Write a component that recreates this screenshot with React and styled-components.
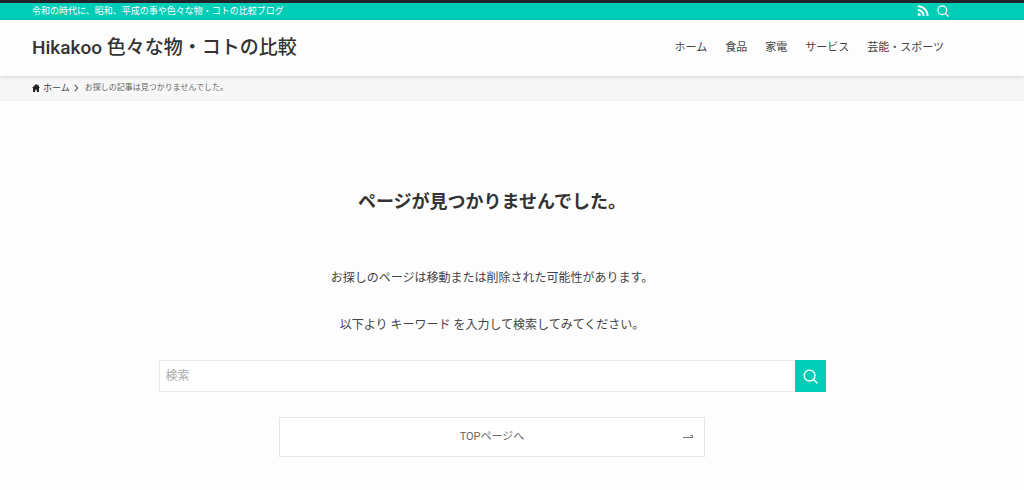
import React from "react";
import styled, { createGlobalStyle } from "styled-components";

const GlobalStyle = createGlobalStyle`
  *, *::before, *::after { box-sizing: border-box; }
  body {
    margin: 0;
    background: #fdfdfd;
    color: #333;
    font-family: Roboto, "Noto Sans CJK JP", sans-serif;
    font-size: 12px;
    line-height: 20px;
  }
  a { color: inherit; text-decoration: none; }
`;

const Container = styled.div`
  display: flex;
  align-items: center;
  justify-content: ${(p) => (p.$spread ? "space-between" : "flex-start")};
  height: 100%;
  padding: 0 72px 0 32px;
`;

const TopBar = styled.div`
  height: 20px;
  border-top: 3px solid #20252a;
  background: #00cdb5;
  color: #fff;
`;

const Tagline = styled.p`
  margin: 0;
  font-size: 9px;
  line-height: 17px;
`;

const IconLinks = styled.div`
  display: flex;
  gap: 8px;
  padding: 0 3px 2px 0;
`;

const IconLink = styled.a`
  display: block;
  width: 12px;
  height: 12px;
  svg { display: block; }
`;

const Header = styled.header`
  position: relative;
  height: 56px;
  background: #fdfdfd;
  box-shadow: 0 1px 4px rgba(0, 0, 0, 0.14);
`;

const SiteTitle = styled.a`
  font-size: 19px;
  font-weight: 500;
  line-height: 24px;
`;

const Nav = styled.nav`
  display: flex;
  gap: 18px;
  padding-right: 8px;
  color: #444;
  font-size: 11px;
`;

const Breadcrumb = styled.nav`
  height: 25px;
  background: #f7f7f7;
  border-bottom: 1px solid #f1f1f1;
  font-size: 8px;
  color: #666;
`;

const Crumb = styled.a`
  display: flex;
  align-items: center;
  gap: 3px;
  font-size: 9px;
  color: #444;
`;

const Chevron = styled.svg`
  margin: 0 6px 0 4px;
`;

const Main = styled.main`
  padding: 89px 72px 32px 32px;
`;

const Content = styled.div`
  display: flex;
  flex-direction: column;
  align-items: center;
  max-width: 667px;
  margin: 0 auto;
  text-align: center;
`;

const Heading = styled.h1`
  margin: 0 0 54px;
  font-size: 18px;
  font-weight: 700;
  line-height: 24px;
`;

const Message = styled.p`
  margin: 0;
  color: #444;
`;

const Messages = styled.div`
  display: flex;
  flex-direction: column;
  gap: 27px;
  margin-bottom: 25px;
`;

const SearchForm = styled.form`
  display: flex;
  width: 100%;
  height: 32px;
  margin-bottom: 25px;
`;

const SearchInput = styled.input`
  flex: 1;
  min-width: 0;
  padding: 0 6px;
  border: 1px solid #e8e8e8;
  border-right: 0;
  border-radius: 0;
  background: #fff;
  color: #333;
  font: inherit;
  &::placeholder { color: #aaa; opacity: 1; }
`;

const SearchButton = styled.button`
  display: flex;
  align-items: center;
  justify-content: center;
  width: 31px;
  padding: 0;
  border: 0;
  background: #00cdb5;
  color: #fff;
  cursor: pointer;
`;

const TopLink = styled.a`
  display: grid;
  grid-template-columns: 12px 1fr 12px;
  align-items: center;
  width: 64%;
  height: 40px;
  padding: 0 9px;
  border: 1px solid #e5e5e5;
  background: #fff;
  color: #666;
  font-size: 11px;
  span { grid-column: 2; }
`;

const SearchIcon = ({ size }) => (
  <svg width={size} height={size} viewBox="0 0 16 16" fill="none" stroke="currentColor" strokeWidth="1.5" strokeLinecap="round" aria-hidden="true">
    <circle cx="7" cy="7" r="5.8" />
    <path d="M11.3 11.3 15 15" />
  </svg>
);

const RssIcon = () => (
  <svg width="12" height="12" viewBox="0 0 12 12" fill="none" stroke="currentColor" strokeWidth="1.9" aria-hidden="true">
    <circle cx="2.2" cy="9.6" r="1.5" fill="currentColor" stroke="none" />
    <path d="M.7 5a6 6 0 0 1 6 6M.7 1.1a9.9 9.9 0 0 1 9.9 9.9" />
  </svg>
);

const HomeIcon = () => (
  <svg width="8" height="8" viewBox="0 0 8 8" fill="#222" aria-hidden="true">
    <path d="M4 0 0 3.9h1V8h2.2V5.8h1.6V8H7V3.9h1L6.7 2.6V.7h-1v.9Z" />
  </svg>
);

const navItems = ["ホーム", "食品", "家電", "サービス", "芸能・スポーツ"];

export default function App() {
  return (
    <>
      <GlobalStyle />
      <TopBar>
        <Container $spread>
          <Tagline>令和の時代に、昭和、平成の事や色々な物・コトの比較ブログ</Tagline>
          <IconLinks>
            <IconLink href="#rss" aria-label="RSS"><RssIcon /></IconLink>
            <IconLink href="#search" aria-label="検索"><SearchIcon size={12} /></IconLink>
          </IconLinks>
        </Container>
      </TopBar>
      <Header>
        <Container $spread>
          <SiteTitle href="#home">Hikakoo 色々な物・コトの比較</SiteTitle>
          <Nav>
            {navItems.map((item) => <a key={item} href="#category">{item}</a>)}
          </Nav>
        </Container>
      </Header>
      <Breadcrumb>
        <Container>
          <Crumb href="#home"><HomeIcon />ホーム</Crumb>
          <Chevron width="5" height="8" viewBox="0 0 5 8" fill="none" stroke="#555" strokeWidth="1.1" aria-hidden="true">
            <path d="m1 .8 2.6 3.2L1 7.2" />
          </Chevron>
          <span>お探しの記事は見つかりませんでした。</span>
        </Container>
      </Breadcrumb>
      <Main>
        <Content>
          <Heading>ページが見つかりませんでした。</Heading>
          <Messages>
            <Message>お探しのページは移動または削除された可能性があります。</Message>
            <Message>以下より キーワード を入力して検索してみてください。</Message>
          </Messages>
          <SearchForm role="search" onSubmit={(e) => e.preventDefault()}>
            <SearchInput type="text" placeholder="検索" aria-label="検索" />
            <SearchButton type="submit" aria-label="検索する"><SearchIcon size={15} /></SearchButton>
          </SearchForm>
          <TopLink href="#home">
            <span>TOPページへ</span>
            <svg width="11" height="6" viewBox="0 0 11 6" fill="none" stroke="#777" aria-hidden="true">
              <path d="M0 3.5h10M7.5 1.5h2v2" />
            </svg>
          </TopLink>
        </Content>
      </Main>
    </>
  );
}
